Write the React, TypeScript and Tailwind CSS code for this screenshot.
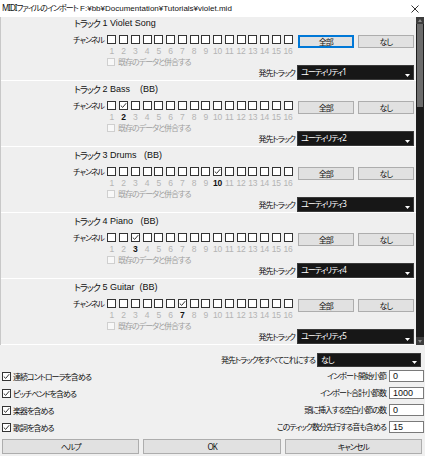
import clsx from "clsx";

const jp = "font-['Noto_Sans','Noto_Sans_CJK_JP',sans-serif] [font-feature-settings:'palt'] tracking-[-1px]";

type TrackInfo = {
  n: number;
  name: string;
  ch: number | null;
  dest: string;
};

const tracks: TrackInfo[] = [
  { n: 1, name: "Violet Song", ch: null, dest: "ユーティリティ1" },
  { n: 2, name: "Bass    (BB)", ch: 2, dest: "ユーティリティ2" },
  { n: 3, name: "Drums   (BB)", ch: 10, dest: "ユーティリティ3" },
  { n: 4, name: "Piano   (BB)", ch: 3, dest: "ユーティリティ4" },
  { n: 5, name: "Guitar  (BB)", ch: 7, dest: "ユーティリティ5" },
];

function Check({ on, disabled, size = 9 }: { on?: boolean; disabled?: boolean; size?: number }) {
  return (
    <span
      className={clsx(
        "flex items-center justify-center shrink-0 border",
        size === 9 ? "w-[9px] h-[9px]" : "w-[8px] h-[8px]",
        disabled ? "border-[#cfcfcf] bg-[#f8f8f8]" : "border-[#333] bg-white"
      )}
    >
      {on && (
        <svg width="7" height="7" viewBox="0 0 7 7">
          <path d="M0.8 3.6 L2.7 5.4 L6.2 1.2" fill="none" stroke="#333" strokeWidth="1" />
        </svg>
      )}
    </span>
  );
}

function Btn({ label, focused, className }: { label: string; focused?: boolean; className?: string }) {
  return (
    <button
      className={clsx(
        "flex items-center justify-center border bg-[#e1e1e1] text-[8px] text-[#111]",
        jp,
        focused ? "border-[#0078d7] border-2" : "border-[#adadad]",
        className
      )}
    >
      {label}
    </button>
  );
}

function Dropdown({ value, className }: { value: string; className?: string }) {
  return (
    <div
      className={clsx(
        "flex items-stretch justify-between bg-[#171717] border border-[#3a3a3a] pl-[3px] pr-[3px]",
        className
      )}
    >
      <span className={clsx("text-[8px] leading-[12px] text-white", jp)}>{value}</span>
      <span className="flex items-end pb-[2px]">
        <svg width="5" height="3" viewBox="0 0 5 3">
          <path d="M0 0 H5 L2.5 3 Z" fill="#fff" />
        </svg>
      </span>
    </div>
  );
}

function TrackSection({ t, first }: { t: TrackInfo; first?: boolean }) {
  return (
    <div
      className={clsx(
        "flex flex-col pl-[73px] pr-[2px] border-b border-white",
        first ? "h-[64px] pt-[1px]" : "h-[66px] pt-[3px]"
      )}
    >
      <div className="h-[12px] flex items-center text-[9px] text-[#111] whitespace-pre font-['Liberation_Sans',sans-serif]">
        <span className={clsx("text-[9px]", jp)}>トラック</span>
        <span> {t.n} {t.name}</span>
      </div>
      <div className="mt-[5px] flex items-start">
        <span
          className={clsx(
            "w-[32px] h-[9px] pr-[2px] flex items-center justify-end whitespace-nowrap text-[8px] text-[#111]",
            jp
          )}
        >
          チャンネル
        </span>
        <div className="flex">
          {Array.from({ length: 16 }, (_, i) => i + 1).map((c) => (
            <div key={c} className="w-[11.75px] flex flex-col items-center">
              <Check on={t.ch === c} />
              <span
                className={clsx(
                  "mt-[1px] h-[12px] leading-[12px] text-[8.5px] font-['Liberation_Sans',sans-serif]",
                  t.ch === c ? "text-[#111] font-bold" : "text-[#b4b4b4]"
                )}
              >
                {c}
              </span>
            </div>
          ))}
        </div>
        <Btn label="全部" focused={first} className="ml-[4px] w-[56px] h-[13px]" />
        <Btn label="なし" className="ml-[4px] w-[57px] h-[13px]" />
      </div>
      <div className="flex items-start">
        <div className="ml-[33px] h-[10px] flex items-center gap-[3px]">
          <Check disabled size={8} />
          <span className={clsx("text-[8px] text-[#a0a0a0]", jp)}>既存のデータと併合する</span>
        </div>
        <div className="ml-auto mt-[8px] flex items-center">
          <span className={clsx("text-[8px] text-[#111] mr-[2px]", jp)}>発先トラック</span>
          <Dropdown value={t.dest} className="w-[117px] h-[15px]" />
        </div>
      </div>
    </div>
  );
}

function Scrollbar() {
  return (
    <div className="w-[8px] flex flex-col bg-[#1b1b1b]">
      <div className="h-[7px] bg-[#3d3d3d] flex items-center justify-center">
        <svg width="4" height="3" viewBox="0 0 4 3">
          <path d="M0 3 L2 0 L4 3 Z" fill="#8a8a8a" />
        </svg>
      </div>
      <div className="h-[83px] mx-[1px] bg-[#6c6c6c]" />
      <div className="flex-1" />
      <div className="h-[8px] bg-[#3d3d3d] flex items-center justify-center">
        <svg width="4" height="3" viewBox="0 0 4 3">
          <path d="M0 0 L4 0 L2 3 Z" fill="#8a8a8a" />
        </svg>
      </div>
    </div>
  );
}

export default function App() {
  const options = ["連続コントローラを含める", "ピッチベンドを含める", "楽器を含める", "歌詞を含める"];
  const fields = [
    ["インポート開始小節", "0"],
    ["インポート合計小節数", "1000"],
    ["頭に挿入する空白小節の数", "0"],
    ["このティック数分先行する音も含める", "15"],
  ];
  return (
    <div className="w-[425px] h-[456px] bg-[#f0f0f0] flex flex-col overflow-hidden">
      {/* title bar */}
      <div className="h-[17px] bg-white flex items-center justify-between pl-[2px] pr-[6px]">
        <span className="text-[8px] text-[#111] whitespace-pre font-['Liberation_Sans',sans-serif]">
          <span className={clsx("text-[8px]", jp)}>MIDIファイルのインポート</span> F:¥bb¥Documentation¥Tutorials¥violet.mid
        </span>
        <svg width="8" height="8" viewBox="0 0 8 8">
          <path d="M0.5 0.5 L7.5 7.5 M7.5 0.5 L0.5 7.5" stroke="#333" strokeWidth="1" />
        </svg>
      </div>

      {/* track list */}
      <div className="h-[328px] flex border-l border-[#c8c8c8]">
        <div className="w-[415px] flex flex-col bg-[#efefef]">
          {tracks.map((t, i) => (
            <TrackSection key={t.n} t={t} first={i === 0} />
          ))}
        </div>
        <Scrollbar />
        <div className="flex-1 bg-white" />
      </div>

      {/* bottom */}
      <div className="flex-1 flex flex-col pt-[8px] pl-[2px] pr-[1px]">
        <div className="flex items-center justify-end pr-[3px]">
          <span className={clsx("text-[8px] text-[#111] mr-[2px]", jp)}>発先トラックをすべてこれにする</span>
          <Dropdown value="なし" className="w-[104px] h-[14px]" />
        </div>
        <div className="flex">
          <div className="flex flex-col pt-[1px]">
            {options.map((o) => (
              <div key={o} className="h-[17px] flex items-center gap-[2px]">
                <Check on />
                <span className={clsx("text-[8px] text-[#111]", jp)}>{o}</span>
              </div>
            ))}
          </div>
          <div className="ml-auto flex flex-col">
            {fields.map(([label, v]) => (
              <div key={label} className="h-[17px] flex items-center justify-end">
                <span className={clsx("text-[8px] text-[#111] mr-[3px]", jp)}>{label}</span>
                <div className="w-[35px] h-[12px] bg-white border border-[#7a7a7a] pl-[3px] text-[9px] leading-[10px] text-[#111] font-['Liberation_Sans',sans-serif]">
                  {v}
                </div>
              </div>
            ))}
          </div>
        </div>
        <div className="mt-[3px] flex gap-[4px] pr-[2px]">
          <Btn label="ヘルプ" className="flex-1 h-[15px]" />
          <Btn label="OK" className="flex-1 h-[15px]" />
          <Btn label="キャンセル" className="flex-1 h-[15px]" />
        </div>
      </div>
    </div>
  );
}
